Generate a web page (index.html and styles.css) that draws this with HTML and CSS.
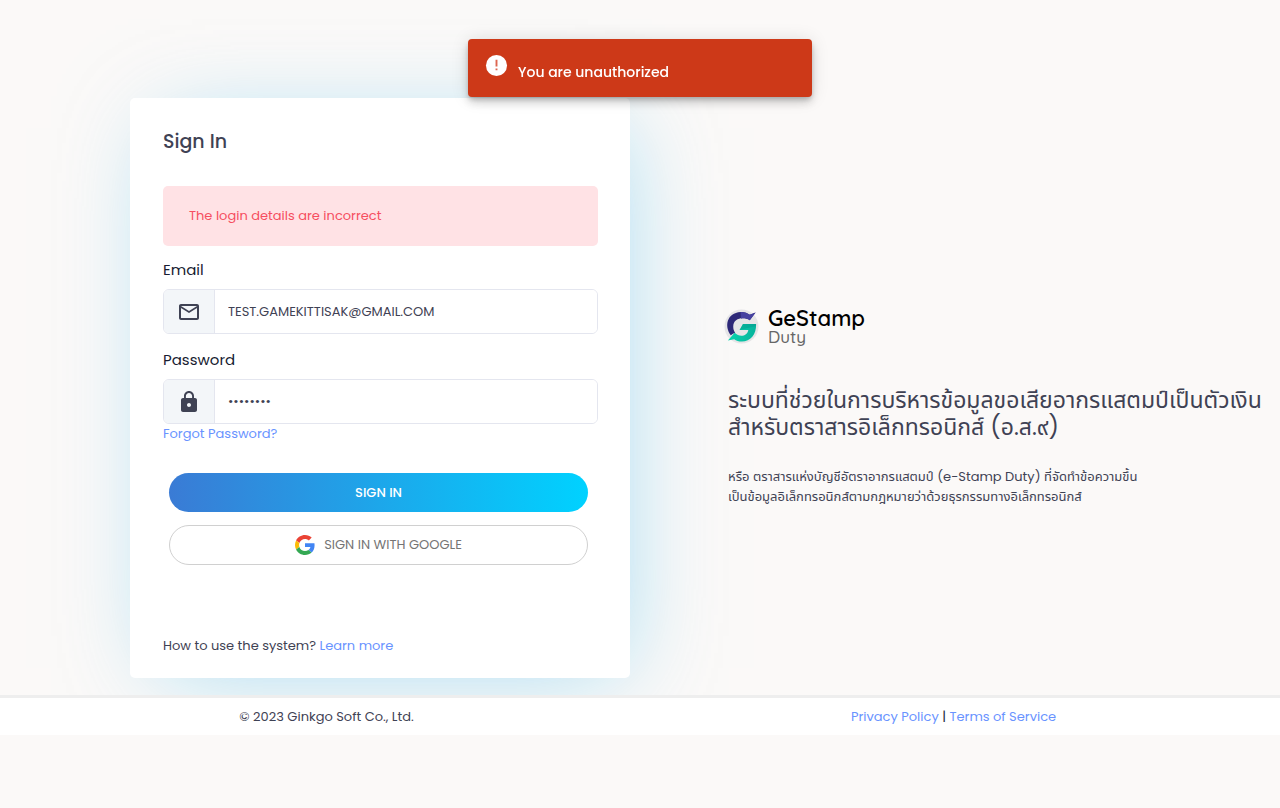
FILE: index.html
```html
<!DOCTYPE html>
<html lang="en">
<head>
<meta charset="utf-8">
<meta name="viewport" content="width=device-width, initial-scale=1">
<title>GeStamp Duty - Sign In</title>
<link rel="stylesheet" href="styles.css">
</head>
<body>
<div class="toast" role="alert">
  <svg class="toast-icon" viewBox="0 0 24 24" aria-hidden="true"><circle cx="12" cy="12" r="11" fill="#fff"/><path d="M11 6h2v7h-2zM11 15h2v2h-2z" fill="#dd6650"/></svg>
  <span class="toast-text">You are unauthorized</span>
</div>
<main class="page">
  <section class="card">
    <h1 class="card-title">Sign In</h1>
    <div class="alert">The login details are incorrect</div>
    <form class="form">
      <div class="field">
        <label class="label" for="email">Email</label>
        <div class="group">
          <span class="addon"><svg viewBox="0 0 24 24" aria-hidden="true"><path fill="currentColor" d="M22 6c0-1.100-.9-2-2-2H4c-1.100 0-2 .9-2 2v12c0 1.100.9 2 2 2h16c1.100 0 2-.9 2-2V6zm-2 0l-8 5-8-5h16zm0 12H4V8l8 5 8-5v10z"/></svg></span>
          <input class="input" id="email" type="text" value="TEST.GAMEKITTISAK@GMAIL.COM">
        </div>
      </div>
      <div class="field">
        <label class="label" for="password">Password</label>
        <div class="group">
          <span class="addon"><svg viewBox="0 0 24 24" aria-hidden="true"><path fill="currentColor" d="M18 8h-1V6c0-2.760-2.240-5-5-5S7 3.240 7 6v2H6c-1.100 0-2 .9-2 2v10c0 1.100.9 2 2 2h12c1.100 0 2-.9 2-2V10c0-1.100-.9-2-2-2zm-6 9c-1.100 0-2-.9-2-2s.9-2 2-2 2 .9 2 2-.9 2-2 2zM8.900 8V6c0-1.710 1.390-3.100 3.100-3.100s3.100 1.390 3.100 3.100v2H8.900z"/></svg></span>
          <input class="input password" id="password" type="password" value="password">
        </div>
      </div>
      <a class="link" href="#">Forgot Password?</a>
      <div class="actions">
        <button class="btn btn-primary" type="submit">SIGN IN</button>
        <button class="btn btn-google" type="button">
          <svg class="google" viewBox="0 0 48 48" aria-hidden="true"><path fill="#EA4335" d="M24 9.500c3.540 0 6.710 1.220 9.210 3.600l6.850-6.850C35.900 2.380 30.470 0 24 0 14.620 0 6.510 5.380 2.560 13.220l7.980 6.190C12.430 13.720 17.740 9.500 24 9.500z"/><path fill="#4285F4" d="M46.980 24.550c0-1.570-.15-3.090-.38-4.550H24v9.020h12.940c-.58 2.960-2.260 5.480-4.780 7.180l7.730 6c4.510-4.180 7.090-10.360 7.090-17.650z"/><path fill="#FBBC05" d="M10.530 28.590c-.48-1.450-.76-2.990-.76-4.590s.27-3.140.76-4.590l-7.980-6.190C.92 16.460 0 20.120 0 24s.92 7.540 2.560 10.780l7.970-6.190z"/><path fill="#34A853" d="M24 48c6.480 0 11.930-2.130 15.890-5.810l-7.730-6c-2.150 1.450-4.920 2.300-8.160 2.300-6.260 0-11.570-4.220-13.470-9.910l-7.980 6.190C6.510 42.620 14.620 48 24 48z"/></svg>
          <span>SIGN IN WITH GOOGLE</span>
        </button>
      </div>
    </form>
    <p class="help">How to use the system? <a class="link" href="#">Learn more</a></p>
  </section>
  <section class="intro">
    <div class="brand">
      <svg class="brand-mark" viewBox="0 0 36 36" aria-hidden="true">
        <defs><linearGradient id="teal" x1="0" y1="0" x2="1" y2="0"><stop offset="0" stop-color="#08d4ae"/><stop offset="1" stop-color="#06b39c"/></linearGradient></defs>
        <circle cx="18" cy="18.500" r="17.500" fill="#e5e5e7"/>
        <path fill="#2c2878" d="M7 27.500C0 18 3 4.500 17 3.500c4-.2 7 1 9.500 3L32.500 4l-6 8c-6-3.500-17-2.500-17 6.500 0 2.500.5 4.500 2 6.500-1.500.5-3 1.300-4.500 2.500z"/>
        <path fill="#4541a0" d="M17 3.500c4-.2 7 1 9.500 3L32.500 4l-6 8c-3-1.700-6-2.300-9-1.500z"/>
        <path fill="url(#teal)" d="M19.500 16H33c.5 11-6 18-14.500 18-3.500 0-6-.8-8-2.500L4 33l7-8c5 5 13 3.500 14-3h-9z"/>
        <path fill="#048f88" d="M19.500 16H33v2L16 22z" opacity=".35"/>
      </svg>
      <span class="brand-words"><span class="brand-name">GeStamp</span><span class="brand-sub">Duty</span></span>
    </div>
    <h2 class="headline" lang="th">ระบบที่ช่วยในการบริหารข้อมูลขอเสียอากรแสตมป์เป็นตัวเงิน<br>สำหรับตราสารอิเล็กทรอนิกส์ (อ.ส.๙)</h2>
    <p class="summary" lang="th">หรือ ตราสารแห่งบัญชีอัตราอากรแสตมป์ (e-Stamp Duty) ที่จัดทำข้อความขึ้น<br>เป็นข้อมูลอิเล็กทรอนิกส์ตามกฎหมายว่าด้วยธุรกรรมทางอิเล็กทรอนิกส์</p>
  </section>
</main>
<footer class="footer">
  <div class="copyright">© 2023 Ginkgo Soft Co., Ltd.</div>
  <nav class="legal"><a class="link" href="#">Privacy Policy</a> | <a class="link" href="#">Terms of Service</a></nav>
</footer>
</body>
</html>
```

FILE: styles.css
```css
* { box-sizing: border-box; }
body {
  margin: 0;
  background: #fbf9f8;
  color: #3f4254;
  font: 400 13px/20px Poppins, Inter, "Noto Sans Thai", "Noto Sans", sans-serif;
}
h1, h2, p { margin: 0; }
.link { color: #6993ff; text-decoration: none; }

.toast {
  position: fixed;
  z-index: 2;
  top: 39px;
  left: 50%;
  transform: translateX(-50%);
  display: flex;
  gap: 10px;
  width: 344px;
  padding: 15px 17px;
  border-radius: 4px;
  background: #cd3918;
  color: #fff;
  box-shadow: 0 3px 5px -1px rgba(0,0,0,.2), 0 6px 10px rgba(0,0,0,.14), 0 1px 18px rgba(0,0,0,.12);
}
.toast-icon { width: 23px; height: 23px; }
.toast-text { padding-top: 8px; font-size: 14px; font-weight: 500; }

.page { display: grid; grid-template-columns: 1fr 1fr; padding-top: 98px; }
.card {
  justify-self: end;
  width: calc(100% - 10px);
  max-width: 500px;
  margin: 0 10px 17px 0;
  padding: 30px 32px 22px 33px;
  border-radius: 5px;
  background: #fff;
  box-shadow: 10px 10px 90px -20px rgba(120,205,240,.68);
}
.card-title { font-size: 19px; line-height: 28px; font-weight: 500; margin-bottom: 30px; }
.alert {
  margin-bottom: 14px;
  padding: 20px 26px;
  border-radius: 5px;
  background: #ffe2e5;
  color: #f64e60;
}
.field { margin-bottom: 16px; }
.field + .field { margin-bottom: 0; }
.label { display: block; margin-bottom: 9px; color: #181c32; font-size: 15px; }
.group {
  display: flex;
  height: 45px;
  overflow: hidden;
  border: 1px solid #e4e6ef;
  border-radius: 6px;
}
.addon {
  display: flex;
  align-items: center;
  justify-content: center;
  width: 51px;
  border-right: 1px solid #e4e6ef;
  background: #f3f6f9;
}
.addon svg { width: 24px; height: 24px; }
.input {
  flex: 1;
  min-width: 0;
  padding: 0 13px;
  border: 0;
  outline: 0;
  background: #fff;
  color: #3f4254;
  font: inherit;
}
.actions { display: grid; gap: 13px; padding: 29px 10px 0 6px; }
.btn {
  display: flex;
  align-items: center;
  justify-content: center;
  gap: 9px;
  height: 39px;
  border: 0;
  border-radius: 20px;
  font: inherit;
  cursor: pointer;
}
.btn-primary { background: linear-gradient(90deg, #3a7bd5, #00d2ff); color: #fff; font-weight: 500; }
.btn-google { height: 40px; border: 1px solid #d0d0d0; background: #fff; color: #757575; }
.google { width: 20px; height: 20px; }
.help { margin-top: 71px; }

.intro { padding: 210px 0 0 88px; }
.brand { display: flex; gap: 9px; margin-left: -4px; }
.brand-mark { width: 35px; height: 36px; }
.brand-words { display: flex; flex-direction: column; font-family: Quicksand, Lato, sans-serif; }
.brand-name { color: #000; font-size: 22px; line-height: 20px; font-weight: 600; }
.brand-sub { color: #666; font-size: 17px; line-height: 17px; font-weight: 500; }
.headline { margin-top: 42px; font-size: 23px; line-height: 27px; font-weight: 400; white-space: nowrap; }
.summary { margin-top: 26px; font-weight: 400; white-space: nowrap; }

.footer {
  position: relative;
  display: grid;
  grid-template-columns: 1fr 1fr;
  padding: 9px 0 8px;
  border-top: 3px solid #eee;
  background: #fff;
  text-align: center;
}
.copyright { padding-left: 13px; }
.legal { padding-right: 13px; color: #181c32; }
```
